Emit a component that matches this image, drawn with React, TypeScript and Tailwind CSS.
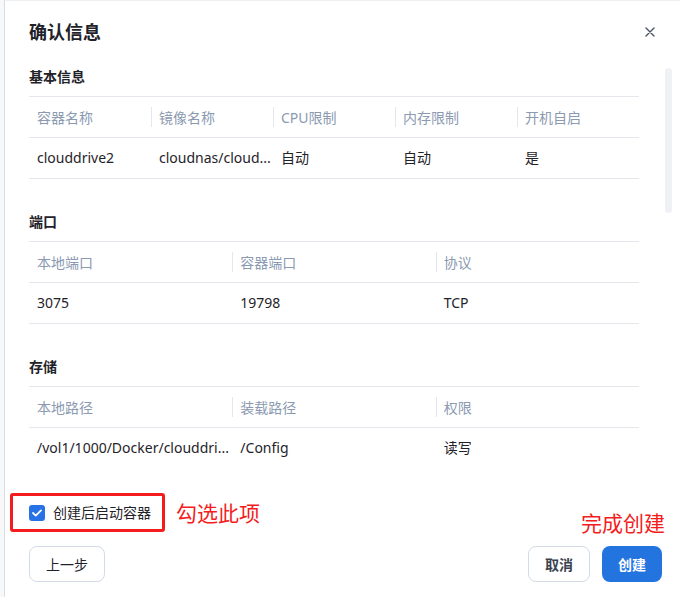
import React from 'react';

const font = { fontFamily: '"Noto Sans", "Noto Sans CJK SC", sans-serif' };

interface Section {
  title: string;
  columns: string[];
  rows: string[][];
}

const sections: Section[] = [
  {
    title: '基本信息',
    columns: ['容器名称', '镜像名称', 'CPU限制', '内存限制', '开机自启'],
    rows: [['clouddrive2', 'cloudnas/cloud...', '自动', '自动', '是']],
  },
  {
    title: '端口',
    columns: ['本地端口', '容器端口', '协议'],
    rows: [['3075', '19798', 'TCP']],
  },
  {
    title: '存储',
    columns: ['本地路径', '装载路径', '权限'],
    rows: [['/vol1/1000/Docker/clouddri...', '/Config', '读写']],
  },
];

function InfoTable({ section, last }: { section: Section; last: boolean }) {
  const cols = section.columns.length === 5 ? 'grid-cols-5' : 'grid-cols-3';
  return (
    <div className={last ? '' : 'mb-[33px]'}>
      <div className="h-5 leading-5 text-[14px] font-bold text-[#1f2329] mb-[9px]">{section.title}</div>
      <div className={`grid ${cols} border-t border-[#e4e7ec] h-[41px] items-center`}>
        {section.columns.map((c, i) => (
          <div key={c} className="relative px-2 text-[14px] text-[#8b9ab1] truncate">
            {i > 0 && <span className="absolute left-0 top-[-1px] h-[21px] w-px bg-[#e4e7ec]" />}
            {c}
          </div>
        ))}
      </div>
      {section.rows.map((r, ri) => (
        <div key={ri} className={`grid ${cols} border-t border-[#e4e7ec] h-[41px] items-center`}>
          {r.map((v, i) => (
            <div key={i} className="px-2 pb-[2px] text-[14px] text-[#1f2329] whitespace-nowrap">
              {v}
            </div>
          ))}
        </div>
      ))}
      {!last && <div className="border-t border-[#e4e7ec]" />}
    </div>
  );
}

export default function App() {
  return (
    <div className="relative w-[680px] h-[597px] flex bg-white overflow-hidden" style={font}>
      {/* left edge of page behind dialog */}
      <div className="w-[5px] h-full bg-[#f7f8fa] border-r border-[#d9dce1]" />

      <div className="relative flex-1 h-full flex flex-col border-t border-[#eef0f3]">
        {/* header */}
        <div className="h-[65px] flex items-start justify-between pl-[24px] pr-[25px] pt-[19px]">
          <div className="text-[18px] leading-6 font-bold text-[#1f2329]">确认信息</div>
          <svg width="10" height="10" viewBox="0 0 10 10" className="mt-[7px]">
            <path d="M1 1 L9 9 M9 1 L1 9" stroke="#4a5463" strokeWidth="1.4" strokeLinecap="round" />
          </svg>
        </div>

        {/* scrolling content */}
        <div className="relative h-[404px] overflow-hidden pl-[24px] pr-[41px] pt-[1px]">
          {sections.map((s, i) => (
            <InfoTable key={s.title} section={s} last={i === sections.length - 1} />
          ))}
          <div className="absolute right-[8px] top-[2px] w-[7px] h-[145px] rounded-full bg-[#f0f1f4]" />
        </div>

        {/* footer */}
        <div className="flex flex-col">
          <div className="mt-[23px] ml-[5px] w-[155px] h-[39px] border-[3px] border-[#f41c1c] rounded-[3px] flex items-center pl-[16px] gap-[8px]">
            <span className="w-4 h-4 rounded-[3px] bg-[#2672e6] flex items-center justify-center">
              <svg width="10" height="8" viewBox="0 0 10 8">
                <path d="M1 4 L3.8 6.6 L9 1.4" stroke="white" strokeWidth="1.8" fill="none" strokeLinecap="round" strokeLinejoin="round" />
              </svg>
            </span>
            <span className="text-[14px] text-[#1f2329]">创建后启动容器</span>
          </div>

          <div className="mt-[14px] flex items-center justify-between pl-[24px] pr-[18px]">
            <button className="w-[76px] h-[36px] border border-[#d3dbe7] rounded-lg text-[14px] text-[#1f2329] bg-white">
              上一步
            </button>
            <div className="flex gap-[12px]">
              <button className="w-[62px] h-[36px] border border-[#d3dbe7] rounded-lg text-[14px] font-bold text-[#3a4250] bg-white">
                取消
              </button>
              <button className="w-[60px] h-[36px] rounded-lg text-[14px] font-bold text-white bg-[#2474e0]">
                创建
              </button>
            </div>
          </div>
        </div>
      </div>

      {/* red annotations */}
      <span className="absolute left-[176px] top-[501px] text-[21px] leading-6 text-[#f41c1c]">勾选此项</span>
      <span className="absolute left-[581px] top-[511px] text-[21px] leading-6 text-[#f41c1c]">完成创建</span>
    </div>
  );
}
